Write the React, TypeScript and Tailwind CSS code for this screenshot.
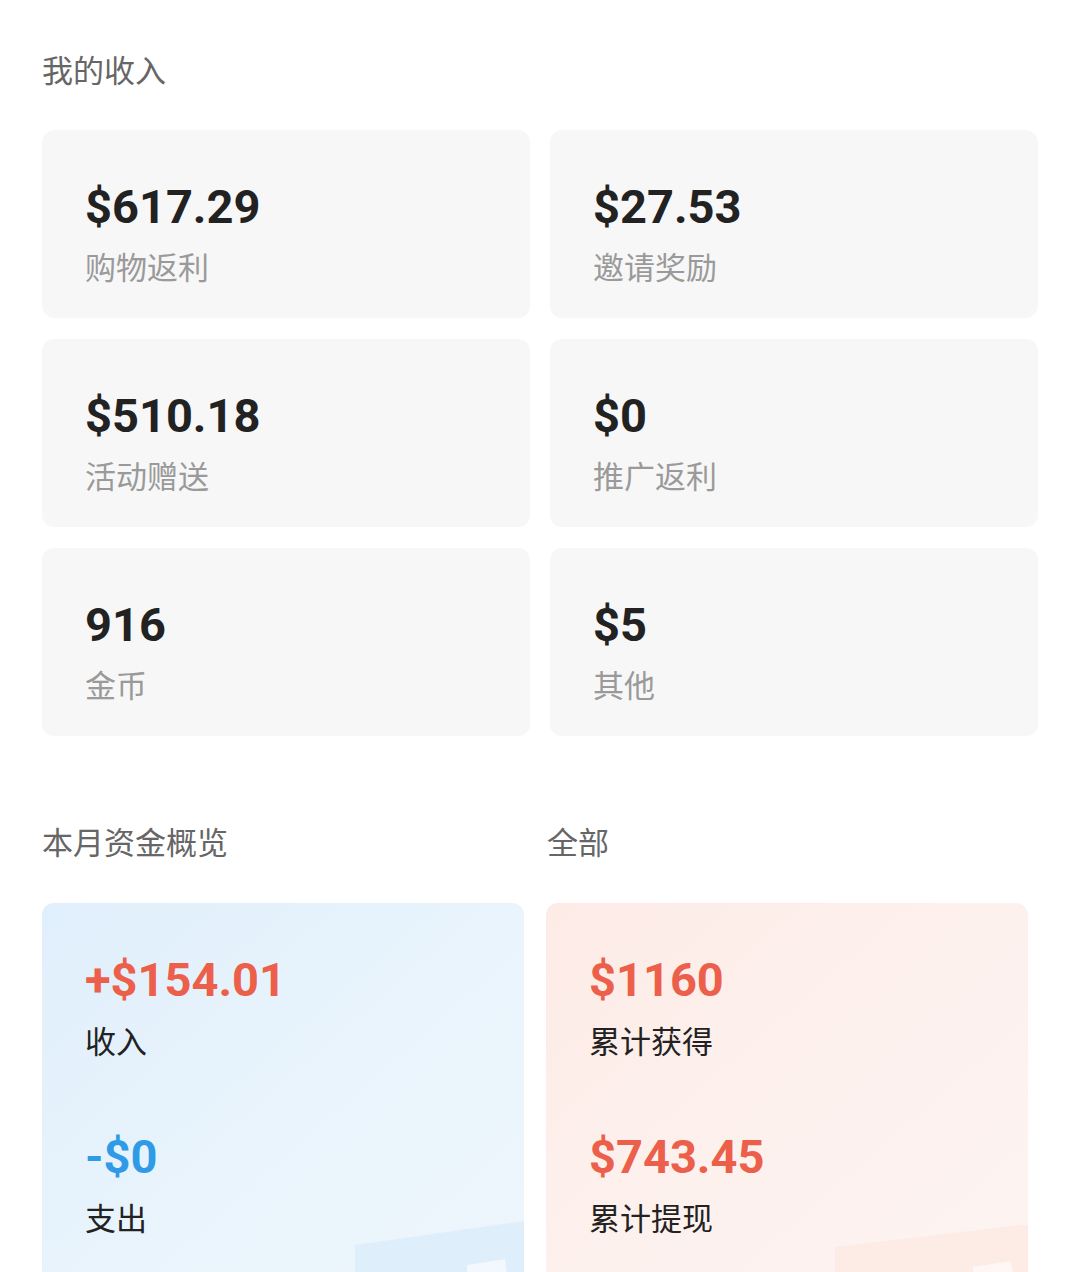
import React from "react";

const num = { fontFamily: "Roboto, 'Noto Sans CJK SC', sans-serif" };
const cjk = { fontFamily: "'Noto Sans CJK SC', 'Noto Sans', sans-serif" };

function IncomeCard({ amount, label }: { amount: string; label: string }) {
  return (
    <div className="rounded-[12px] bg-[#f7f7f7] pl-[43px] pt-[53px] pb-[37px]">
      <div style={num} className="text-[47px] leading-[47px] font-bold text-[#222222]">
        {amount}
      </div>
      <div style={cjk} className="mt-[20px] text-[31px] leading-[31px] text-[#9a9a9a]">
        {label}
      </div>
    </div>
  );
}

function StatBlock({ amount, label, color }: { amount: string; label: string; color: string }) {
  return (
    <div>
      <div style={num} className={`text-[47px] leading-[47px] font-bold ${color}`}>
        {amount}
      </div>
      <div style={cjk} className="mt-[21px] text-[31px] leading-[31px] text-[#222222]">
        {label}
      </div>
    </div>
  );
}

export default function App() {
  const items = [
    ["$617.29", "购物返利"],
    ["$27.53", "邀请奖励"],
    ["$510.18", "活动赠送"],
    ["$0", "推广返利"],
    ["916", "金币"],
    ["$5", "其他"],
  ];
  return (
    <div className="w-[1080px] h-[1272px] overflow-hidden bg-white px-[42px] pt-[53px]">
      <div style={cjk} className="text-[31px] leading-[31px] text-[#666666]">
        我的收入
      </div>
      <div className="mt-[46px] grid grid-cols-2 gap-x-[20px] gap-y-[21px]">
        {items.map(([a, l]) => (
          <IncomeCard key={l} amount={a} label={l} />
        ))}
      </div>

      <div className="mt-[89px] grid grid-cols-[482px_482px] gap-x-[22px]">
        <div style={cjk} className="text-[31px] leading-[31px] text-[#666666]">
          本月资金概览
        </div>
        <div style={cjk} className="pl-[1px] text-[31px] leading-[31px] text-[#666666]">
          全部
        </div>
        <div className="relative mt-[47px] h-[420px] overflow-hidden rounded-[12px] bg-gradient-to-br from-[#e0effc] via-[#e9f4fc] to-[#eef6fc] pl-[43px] pt-[53px]">
          <svg className="absolute left-[313px] top-[318px]" width="169" height="102" viewBox="0 0 169 102">
            <polygon points="0,24 169,0 169,102 0,102" fill="#d8ebfb" opacity="0.7" />
            <polygon points="112,44 150,38 158,102 112,102" fill="#ffffff" opacity="0.6" />
          </svg>
          <div className="relative">
            <StatBlock amount="+$154.01" label="收入" color="text-[#ec5f4a]" />
            <div className="mt-[78px]">
              <StatBlock amount="-$0" label="支出" color="text-[#2f9be6]" />
            </div>
          </div>
        </div>
        <div className="relative mt-[47px] h-[420px] overflow-hidden rounded-[12px] bg-gradient-to-br from-[#fdebe6] via-[#fdf1ee] to-[#fdf4f2] pl-[43px] pt-[53px]">
          <svg className="absolute left-[289px] top-[322px]" width="193" height="98" viewBox="0 0 193 98">
            <polygon points="0,22 185,0 193,0 193,98 0,98" fill="#fce9e2" opacity="0.75" />
            <polygon points="138,42 176,36 184,98 138,98" fill="#ffffff" opacity="0.6" />
          </svg>
          <div className="relative">
            <StatBlock amount="$1160" label="累计获得" color="text-[#ec5f4a]" />
            <div className="mt-[78px]">
              <StatBlock amount="$743.45" label="累计提现" color="text-[#ec5f4a]" />
            </div>
          </div>
        </div>
      </div>
    </div>
  );
}
